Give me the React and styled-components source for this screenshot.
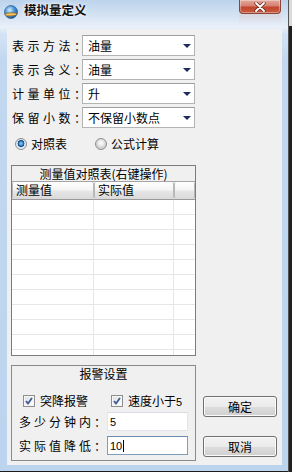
import React from "react";
import styled, { createGlobalStyle } from "styled-components";

const Global = createGlobalStyle`
  html, body { margin: 0; padding: 0; }
  body {
    background: #1c1c1c;
    font-family: "Liberation Sans", "Noto Sans CJK SC", sans-serif;
    font-size: 12px;
    color: #000;
  }
  #root { width: 292px; height: 472px; }
`;

const Desktop = styled.div`
  display: flex;
  width: 292px;
  height: 472px;
  overflow: hidden;
  background: #1c1c1c;
`;

const Window = styled.div`
  width: 288px;
  height: 471px;
  flex: none;
  display: flex;
  flex-direction: column;
  background: linear-gradient(
    to bottom,
    #bdd3ec 0px,
    #d2e1f2 14px,
    #e9f0f9 27px,
    #d3e3f4 34px,
    #c2d8f0 60px,
    #bdd4ee 100%
  );
`;

const Strip = styled.div`
  flex: 1;
  background: linear-gradient(to bottom, #dadada 0, #dadada 26px, #202020 26px);
  border-left: 1px solid #555;
`;

const TitleBar = styled.div`
  height: 29px;
  flex: none;
  display: flex;
  align-items: flex-start;
  padding: 0 7px 0 3px;
  box-sizing: border-box;
`;

const AppIcon = styled.svg`
  margin-top: 5px;
  flex: none;
`;

const Title = styled.span`
  margin: 2px 0 0 5px;
  font-family: "Noto Sans CJK SC", sans-serif;
  font-weight: 700;
  font-size: 12.5px;
  line-height: 16px;
  color: #111;
  text-shadow: 0 0 5px rgba(255, 255, 255, 0.95), 0 0 2px rgba(255, 255, 255, 0.9);
`;

const CloseWrap = styled.div`
  margin-left: auto;
  display: flex;
  flex-direction: column;
`;

const CloseButton = styled.div`
  width: 42px;
  height: 14px;
  box-sizing: border-box;
  border: 1px solid #8a4438;
  border-top: none;
  border-radius: 0 0 4px 4px;
  background: linear-gradient(to bottom, #e3a99c 0%, #d5806f 45%, #c2462f 55%, #c85a40 100%);
  box-shadow: inset 0 0 0 1px rgba(255, 255, 255, 0.35);
  display: flex;
  align-items: center;
  justify-content: center;
`;

const CloseGlow = styled.div`
  width: 42px;
  height: 10px;
  background: linear-gradient(to bottom, rgba(230, 190, 190, 0.35), rgba(230, 200, 200, 0));
`;

const Client = styled.div`
  flex: 1;
  margin: 0 6px 6px 7px;
  background: #f0f0f0;
  display: flex;
`;

const LeftCol = styled.div`
  width: 185px;
  margin-left: 4px;
  padding-top: 6px;
  display: flex;
  flex-direction: column;
`;

const Fields = styled.div`
  display: flex;
  flex-direction: column;
  gap: 3px;
`;

const FormRow = styled.div`
  display: flex;
  align-items: center;
  height: 21px;
`;

const Label = styled.span`
  width: 71px;
  flex: none;
  padding-left: 1px;
  box-sizing: border-box;
  white-space: nowrap;
  letter-spacing: 3.5px;
  font-family: "Noto Sans CJK SC", sans-serif;
  font-size: 12px;
  line-height: 16px;
`;

const Colon = styled.span`
  display: inline-block;
  width: 8px;
  letter-spacing: 0;
`;

const Select = styled.div`
  width: 113px;
  height: 21px;
  box-sizing: border-box;
  border: 1px solid #b4b4b4;
  border-top-color: #9d9d9d;
  background: #fff;
  display: flex;
  align-items: center;
  padding-left: 5px;
  font-family: "Noto Sans CJK SC", sans-serif;
  font-size: 12px;
  line-height: 16px;
`;

const Arrow = styled.span`
  margin-left: auto;
  margin-right: 3px;
  width: 0;
  height: 0;
  border-left: 4px solid transparent;
  border-right: 4px solid transparent;
  border-top: 4px solid #1d2a5c;
`;

const RadioRow = styled.div`
  margin-top: 8px;
  height: 16px;
  display: flex;
  align-items: center;
  padding-left: 4px;
`;

const RadioItem = styled.div`
  width: ${(p) => p.$w}px;
  display: flex;
  align-items: center;
  gap: 4px;
  font-family: "Noto Sans CJK SC", sans-serif;
  font-size: 12px;
  line-height: 16px;
`;

const RadioDot = styled.span`
  width: 12px;
  height: 12px;
  box-sizing: border-box;
  border-radius: 50%;
  border: 1px solid #8e8f8f;
  background: ${(p) =>
    p.$on
      ? "radial-gradient(circle at 50% 45%, #9bd0f5 0, #3f88c9 2px, #13457f 3.2px, #c8dbee 3.6px, #e9eef4 5px)"
      : "radial-gradient(circle at 50% 40%, #ffffff 0, #e6e6e6 3px, #d0d0d0 5px)"};
  flex: none;
`;

const TableGroup = styled.div`
  margin-top: 13px;
  height: 191px;
  box-sizing: border-box;
  border: 1px solid #7c7c7c;
  display: flex;
  flex-direction: column;
  overflow: hidden;
`;

const GroupTitle = styled.div`
  height: 15px;
  flex: none;
  text-align: center;
  font-family: "Noto Sans CJK SC", sans-serif;
  font-size: 12px;
  line-height: 15px;
  border-bottom: ${(p) => (p.$line ? "1px solid #a5a5a5" : "none")};
`;

const GridRow = styled.div`
  display: grid;
  grid-template-columns: 82px 80px 1fr;
  flex: none;
  height: ${(p) => p.$h}px;
  box-sizing: border-box;
  background: #fff;
  border-bottom: 1px solid ${(p) => (p.$head ? "#9a9a9a" : "#e6e6e6")};
`;

const HeadCell = styled.div`
  box-sizing: border-box;
  border: 1px solid #b8b8b8;
  border-top: none;
  border-bottom: none;
  border-radius: 2px;
  background: linear-gradient(to bottom, #ffffff 0%, #f4f4f4 45%, #e6e6e6 55%, #d9d9d9 100%);
  padding-left: 3px;
  font-family: "Noto Sans CJK SC", sans-serif;
  font-size: 12px;
  line-height: 16px;
  white-space: nowrap;
`;

const Cell = styled.div`
  border-right: ${(p) => (p.$last ? "none" : "1px solid #e6e6e6")};
`;

const AlarmGroup = styled.div`
  margin-top: 9px;
  height: 96px;
  box-sizing: border-box;
  border: 1px solid #8a8a8a;
  display: flex;
  flex-direction: column;
`;

const CheckRow = styled.div`
  margin-top: 12px;
  height: 16px;
  display: flex;
  align-items: center;
  padding-left: 11px;
`;

const CheckItem = styled.div`
  width: ${(p) => p.$w}px;
  display: flex;
  align-items: center;
  gap: 5px;
  font-family: "Noto Sans CJK SC", sans-serif;
  font-size: 12px;
  line-height: 16px;
  white-space: nowrap;
`;

const CheckBox = styled.span`
  width: 12px;
  height: 12px;
  box-sizing: border-box;
  border: 1px solid #8f8f8f;
  background: linear-gradient(135deg, #dcdcdc 0%, #f4f4f4 60%, #ffffff 100%);
  box-shadow: inset 0 0 0 1px #f6f6f6;
  display: flex;
  align-items: center;
  justify-content: center;
  flex: none;
`;

const Digit = styled.span`
  font-family: "Liberation Sans", sans-serif;
  font-size: 11px;
`;

const FieldRow = styled.div`
  margin-top: ${(p) => p.$mt}px;
  height: 19px;
  display: flex;
  align-items: center;
  padding-left: 7px;
`;

const FieldLabel = styled.span`
  width: 88px;
  flex: none;
  white-space: nowrap;
  letter-spacing: 3px;
  font-family: "Noto Sans CJK SC", sans-serif;
  font-size: 12px;
  line-height: 16px;
`;

const Input = styled.div`
  width: 81px;
  height: 19px;
  box-sizing: border-box;
  border: 1px solid ${(p) => (p.$focus ? "#7f9db9" : "#e2e6ec")};
  border-top-color: ${(p) => (p.$focus ? "#6d8bb0" : "#d8dde4")};
  background: #fff;
  display: flex;
  align-items: center;
  padding-left: 2px;
  font-family: "Liberation Sans", sans-serif;
  font-size: 11px;
`;

const Caret = styled.span`
  width: 1px;
  height: 12px;
  background: #000;
  margin-left: 1px;
`;

const RightCol = styled.div`
  margin-left: 7px;
  padding-bottom: 8px;
  display: flex;
  flex-direction: column;
  justify-content: flex-end;
  gap: 19px;
`;

const Button = styled.div`
  width: 74px;
  height: 21px;
  box-sizing: border-box;
  border: 1px solid #707070;
  border-radius: 3px;
  background: linear-gradient(to bottom, #f2f2f2 0%, #ebebeb 50%, #dddddd 51%, #cfcfcf 100%);
  box-shadow: inset 0 0 0 1px #fbfbfb;
  display: flex;
  align-items: center;
  justify-content: center;
  font-family: "Noto Sans CJK SC", sans-serif;
  font-size: 12px;
  line-height: 16px;
`;

const selects = [
  ["表示方法", "油量"],
  ["表示含义", "油量"],
  ["计量单位", "升"],
  ["保留小数", "不保留小数点"],
];

const Check = () => (
  <CheckBox>
    <svg width="8" height="8" viewBox="0 0 8 8">
      <path d="M1 4 L3 6.5 L7 1" fill="none" stroke="#3d5a9a" strokeWidth="1.8" />
    </svg>
  </CheckBox>
);

export default function App() {
  return (
    <>
      <Global />
      <Desktop>
        <Window>
          <TitleBar>
            <AppIcon width="16" height="15" viewBox="0 0 16 15">
              <defs>
                <radialGradient id="g" cx="0.4" cy="0.35" r="0.7">
                  <stop offset="0" stopColor="#d6ecff" />
                  <stop offset="0.5" stopColor="#4b95d8" />
                  <stop offset="1" stopColor="#164f94" />
                </radialGradient>
              </defs>
              <circle cx="8" cy="7" r="6.5" fill="url(#g)" stroke="#1d4f86" strokeWidth="0.6" />
              <path d="M1.5 9.5 C4 7.5 9 7 14.5 8.5 C12 11 6 12.5 1.5 9.5 Z" fill="#e2a23a" stroke="#8a5a16" strokeWidth="0.5" />
              <path d="M3 10 C6 9 10 9 13 9.5" fill="none" stroke="#f7dc8a" strokeWidth="0.8" />
            </AppIcon>
            <Title>模拟量定义</Title>
            <CloseWrap>
              <CloseButton>
                <svg width="12" height="10" viewBox="0 0 12 10">
                  <path d="M2 1 L10 9 M10 1 L2 9" stroke="#5a2a22" strokeWidth="3.2" strokeLinecap="round" />
                  <path d="M2 1 L10 9 M10 1 L2 9" stroke="#ffffff" strokeWidth="1.8" strokeLinecap="round" />
                </svg>
              </CloseButton>
              <CloseGlow />
            </CloseWrap>
          </TitleBar>
          <Client>
            <LeftCol>
              <Fields>
                {selects.map(([l, v]) => (
                  <FormRow key={l}>
                    <Label>
                      {l}
                      <Colon>：</Colon>
                    </Label>
                    <Select>
                      {v}
                      <Arrow />
                    </Select>
                  </FormRow>
                ))}
              </Fields>
              <RadioRow>
                <RadioItem $w={80}>
                  <RadioDot $on />
                  对照表
                </RadioItem>
                <RadioItem $w={70}>
                  <RadioDot />
                  公式计算
                </RadioItem>
              </RadioRow>
              <TableGroup>
                <GroupTitle $line>测量值对照表(右键操作)</GroupTitle>
                <GridRow $h={18} $head>
                  <HeadCell>测量值</HeadCell>
                  <HeadCell>实际值</HeadCell>
                  <HeadCell />
                </GridRow>
                {Array.from({ length: 11 }).map((_, i) => (
                  <GridRow key={i} $h={15}>
                    <Cell />
                    <Cell />
                    <Cell $last />
                  </GridRow>
                ))}
              </TableGroup>
              <AlarmGroup>
                <GroupTitle>报警设置</GroupTitle>
                <CheckRow>
                  <CheckItem $w={88}>
                    <Check />
                    突降报警
                  </CheckItem>
                  <CheckItem $w={80}>
                    <Check />
                    <span>
                      速度小于<Digit>5</Digit>
                    </span>
                  </CheckItem>
                </CheckRow>
                <FieldRow $mt={3}>
                  <FieldLabel>
                    多少分钟内<Colon>：</Colon>
                  </FieldLabel>
                  <Input>5</Input>
                </FieldRow>
                <FieldRow $mt={5}>
                  <FieldLabel>
                    实际值降低<Colon>：</Colon>
                  </FieldLabel>
                  <Input $focus>
                    10
                    <Caret />
                  </Input>
                </FieldRow>
              </AlarmGroup>
            </LeftCol>
            <RightCol>
              <Button>确定</Button>
              <Button>取消</Button>
            </RightCol>
          </Client>
        </Window>
        <Strip />
      </Desktop>
    </>
  );
}
